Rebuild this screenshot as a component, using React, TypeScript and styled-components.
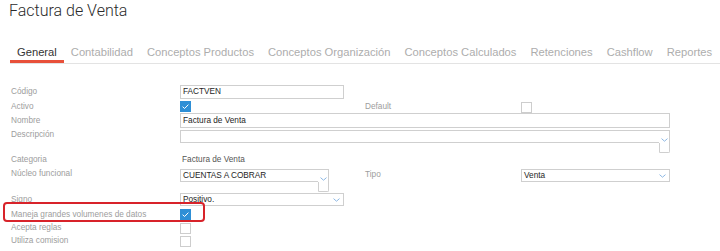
import React from "react";
import styled, { createGlobalStyle } from "styled-components";

const GlobalStyle = createGlobalStyle`
  html, body { margin: 0; padding: 0; background: #fff; }
  body { font-family: "Liberation Sans", Arial, sans-serif; }
  * { box-sizing: border-box; }
`;

const Page = styled.div`
  padding-left: 10px;
  width: 720px;
  height: 251px;
  overflow: hidden;
`;

const Title = styled.h1`
  margin: 0 0 0 -1px;
  padding-top: 1px;
  height: 40px;
  font-family: Roboto, "Liberation Sans", sans-serif;
  font-weight: 300;
  font-size: 16px;
  line-height: 20px;
  color: #2b2b2b;
`;

const TabBar = styled.div`
  display: flex;
  border-bottom: 1px solid #e3e3e3;
`;

const Tab = styled.div<{ $active?: boolean }>`
  display: flex;
  align-items: center;
  height: 23px;
  padding: 3px 7px 0;
  border-bottom: 3px solid ${(p) => (p.$active ? "#e8503a" : "transparent")};
  font-size: 11.2px;
  color: ${(p) => (p.$active ? "#333" : "#adadad")};
  white-space: nowrap;
`;

const Form = styled.div`
  display: flex;
  flex-direction: column;
  padding-top: 21px;
`;

const Row = styled.div<{ $h: number; $mt: number; $wide?: boolean }>`
  position: relative;
  display: grid;
  grid-template-columns: ${(p) =>
    p.$wide ? "170px 490px" : "170px 184px 157px 149px"};
  align-items: start;
  height: ${(p) => p.$h}px;
  margin-top: ${(p) => p.$mt}px;
`;

const Label = styled.div<{ $lh: number }>`
  font-size: 8.25px;
  line-height: ${(p) => p.$lh}px;
  color: #9d9d9d;
  white-space: nowrap;
  padding-left: 1px;
`;

const Value = styled.div`
  font-size: 8.25px;
  line-height: 12px;
  color: #555;
  padding-left: 2px;
`;

const TextBox = styled.div<{ $w?: number; $h: number }>`
  width: ${(p) => (p.$w ? `${p.$w}px` : "100%")};
  height: ${(p) => p.$h}px;
  border: 1px solid #cfcfcf;
  font-size: 8.25px;
  line-height: ${(p) => p.$h - 2}px;
  color: #1e1e1e;
  padding-left: 2px;
  white-space: nowrap;
`;

const SelectBox = styled(TextBox)`
  display: flex;
  align-items: center;
  justify-content: space-between;
  padding-right: 3px;
  line-height: normal;
`;

const Combo = styled.div<{ $w?: number }>`
  display: grid;
  grid-template-columns: 1fr 11px;
  grid-template-rows: 13px 10px;
  width: ${(p) => (p.$w ? `${p.$w}px` : "100%")};
`;

const ComboMain = styled.div`
  border-top: 1px solid #cfcfcf;
  border-left: 1px solid #cfcfcf;
  border-bottom: 1px solid #cfcfcf;
  font-size: 8.25px;
  line-height: 11px;
  color: #1e1e1e;
  padding-left: 2px;
  white-space: nowrap;
`;

const ComboSide = styled.div`
  border-top: 1px solid #cfcfcf;
  border-right: 1px solid #cfcfcf;
  display: flex;
  align-items: flex-end;
  justify-content: center;
  padding-bottom: 1px;
`;

const ComboTail = styled.div`
  grid-column: 2;
  border-left: 1px solid #cfcfcf;
  border-right: 1px solid #cfcfcf;
  border-bottom: 1px solid #cfcfcf;
  border-bottom-left-radius: 1px;
  border-bottom-right-radius: 2px;
`;

const Box = styled.div<{ $checked?: boolean; $mt?: number }>`
  width: 11px;
  height: 11px;
  margin-top: ${(p) => p.$mt ?? 0}px;
  border: 1px solid ${(p) => (p.$checked ? "#2e8fd6" : "#cdcdcd")};
  background: ${(p) => (p.$checked ? "#2e8fd6" : "#fff")};
  display: flex;
  align-items: center;
  justify-content: center;
`;

const Highlight = styled.div`
  position: absolute;
  left: -7px;
  top: -7px;
  width: 202px;
  height: 20px;
  border: 2px solid #d8232a;
  border-radius: 4px;
  pointer-events: none;
`;

const Chevron = () => (
  <svg width="7" height="4" viewBox="0 0 7 4">
    <path d="M0.5 0.6 L3.5 3.2 L6.5 0.6" fill="none" stroke="#8db8e4" strokeWidth="1" />
  </svg>
);

const Checkbox = ({ checked, mt }: { checked?: boolean; mt?: number }) => (
  <Box $checked={checked} $mt={mt}>
    {checked && (
      <svg width="9" height="9" viewBox="0 0 9 9">
        <path d="M1.6 4.7 L3.6 6.5 L7.4 2.6" fill="none" stroke="#fff" strokeWidth="1" />
      </svg>
    )}
  </Box>
);

const tabs = [
  "General",
  "Contabilidad",
  "Conceptos Productos",
  "Conceptos Organización",
  "Conceptos Calculados",
  "Retenciones",
  "Cashflow",
  "Reportes",
];

export default function App() {
  return (
    <>
      <GlobalStyle />
      <Page>
        <Title>Factura de Venta</Title>
        <TabBar>
          {tabs.map((t, i) => (
            <Tab key={t} $active={i === 0}>
              {t}
            </Tab>
          ))}
        </TabBar>
        <Form>
          <Row $h={14} $mt={0}>
            <Label $lh={14}>Código</Label>
            <TextBox $w={164} $h={14}>FACTVEN</TextBox>
          </Row>
          <Row $h={11} $mt={2}>
            <Label $lh={11}>Activo</Label>
            <Checkbox checked />
            <Label $lh={12}>Default</Label>
            <Checkbox mt={1} />
          </Row>
          <Row $h={15} $mt={1} $wide>
            <Label $lh={15}>Nombre</Label>
            <TextBox $h={15}>Factura de Venta</TextBox>
          </Row>
          <Row $h={23} $mt={2} $wide>
            <Label $lh={10}>Descripción</Label>
            <Combo>
              <ComboMain />
              <ComboSide>
                <Chevron />
              </ComboSide>
              <ComboTail />
            </Combo>
          </Row>
          <Row $h={12} $mt={1}>
            <Label $lh={12}>Categoria</Label>
            <Value>Factura de Venta</Value>
          </Row>
          <Row $h={23} $mt={3}>
            <Label $lh={10}>Núcleo funcional</Label>
            <Combo $w={149}>
              <ComboMain>CUENTAS A COBRAR</ComboMain>
              <ComboSide>
                <Chevron />
              </ComboSide>
              <ComboTail />
            </Combo>
            <Label $lh={12}>Tipo</Label>
            <SelectBox $h={13}>
              <span>Venta</span>
              <Chevron />
            </SelectBox>
          </Row>
          <Row $h={13} $mt={1}>
            <Label $lh={13}>Signo</Label>
            <SelectBox $w={164} $h={13}>
              <span>Positivo.</span>
              <Chevron />
            </SelectBox>
          </Row>
          <Row $h={11} $mt={3}>
            <Label $lh={11}>Maneja grandes volumenes de datos</Label>
            <Checkbox checked />
            <Highlight />
          </Row>
          <Row $h={11} $mt={3}>
            <Label $lh={9}>Acepta reglas</Label>
            <Checkbox />
          </Row>
          <Row $h={11} $mt={2}>
            <Label $lh={9}>Utiliza comision</Label>
            <Checkbox />
          </Row>
        </Form>
      </Page>
    </>
  );
}
